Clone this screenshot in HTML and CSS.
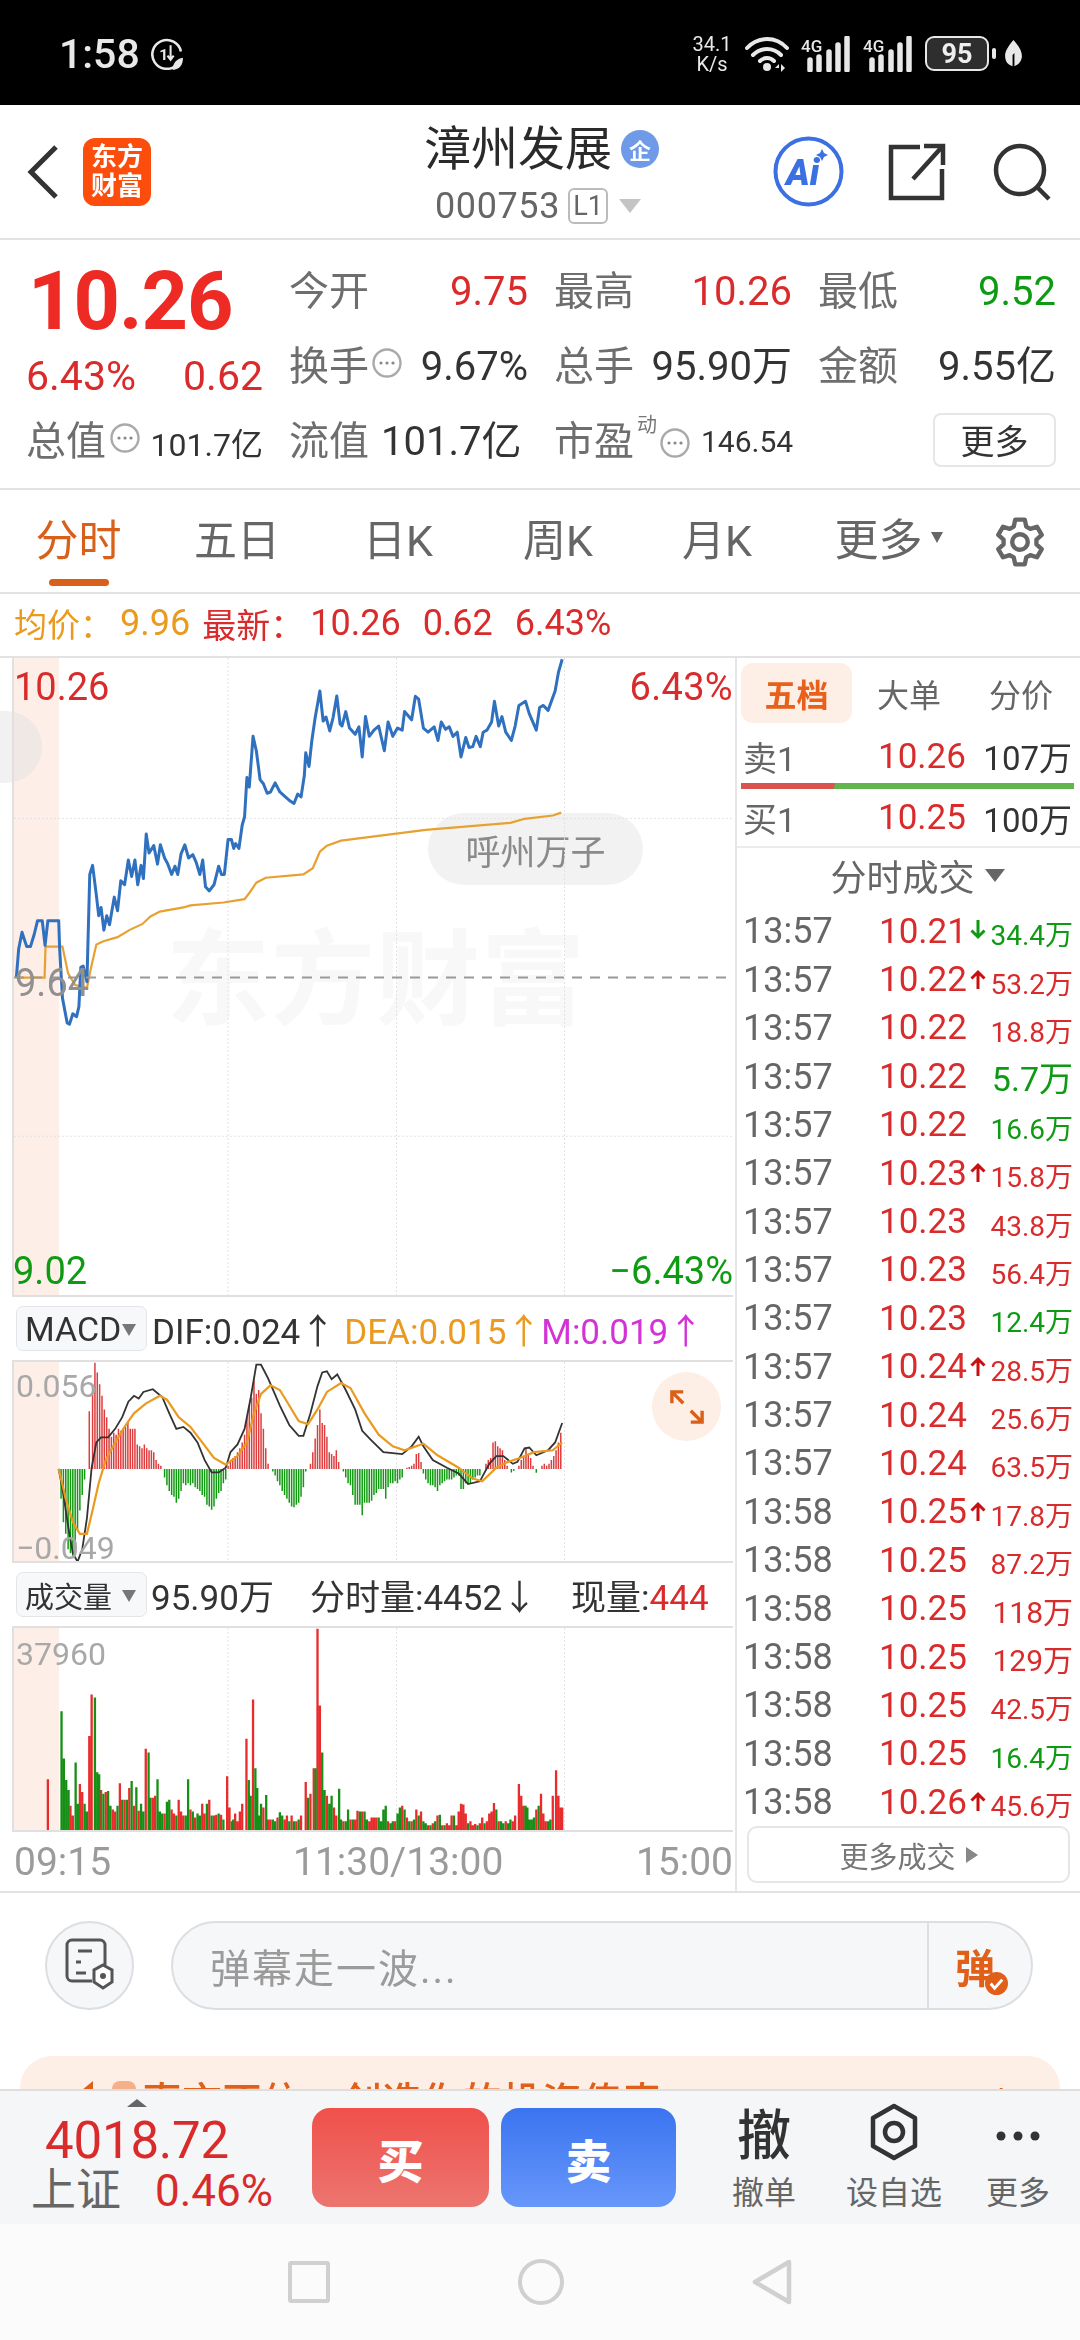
FILE: index.html
```html
<!DOCTYPE html>
<html lang="zh-CN">
<head>
<meta charset="utf-8">
<title>漳州发展</title>
<link rel="stylesheet" href="styles.css">
</head>
<body>
<div class="status">
  <div class="status-left">
    <span class="clock">1:58</span>
    <svg class="st-data" viewBox="0 0 32 32"><path d="M25 27A14 14 0 1 1 29 14" fill="none" stroke="#e8e8e8" stroke-width="2.5"/><text x="8" y="22" class="st-one">1</text><path d="M19 8v14M16 18l3 4 3-4" fill="none" stroke="#e8e8e8" stroke-width="2"/><path d="M21 32c0-7 4-11 10-12 0 7-3 11-10 12z" fill="#e8e8e8"/></svg>
  </div>
  <div class="status-right">
    <div class="speed"><span>34.1</span><span>K/s</span></div>
    <svg class="st-wifi" viewBox="0 0 46 36"><path d="M2 12C13 0 31 0 42 12M8 19c8-8 20-8 28 0M15 25c4-4 10-4 14 0" fill="none" stroke="#e8e8e8" stroke-width="4" stroke-linecap="round"/><circle cx="22" cy="31" r="4" fill="#e8e8e8"/><path d="M34 28l-4 4h4zM36 28v8l4-4z" fill="#e8e8e8"/></svg>
    <svg class="st-sig" viewBox="0 0 52 36"><text x="0" y="16" class="st-4g">4G</text><path d="M9 24v10M18 21v13M28 16v18M37 9v25M46 2v32" stroke="#e8e8e8" stroke-width="5.5" stroke-linecap="round"/></svg>
    <svg class="st-sig" viewBox="0 0 52 36"><text x="0" y="16" class="st-4g">4G</text><path d="M9 24v10M18 21v13M28 16v18M37 9v25M46 2v32" stroke="#e8e8e8" stroke-width="5.5" stroke-linecap="round"/></svg>
    <div class="battery">95</div>
    <span class="bat-tip"></span>
    <svg class="st-leaf" viewBox="0 0 20 30"><path d="M10 0c6 7 9 12 9 17 0 6-4 10-8 11V14l-2 2v12C4 27 1 23 1 17 1 12 4 7 10 0z" fill="#e8e8e8"/></svg>
  </div>
</div>

<header class="header">
  <div class="head-left">
    <svg class="back" viewBox="0 0 32 56"><path d="M29 3L4 28l25 25" fill="none" stroke="#333" stroke-width="5"/></svg>
    <div class="logo"><span>东方</span><span>财富</span></div>
  </div>
  <div class="head-center">
    <div class="name-row"><span class="name">漳州发展</span><span class="badge">企</span></div>
    <div class="code-row"><span class="code">000753</span><span class="l1">L1</span><span class="code-tri"></span></div>
  </div>
  <div class="head-right">
    <svg class="ai" viewBox="0 0 71 71"><circle cx="35.5" cy="35.5" r="33" fill="#fff" stroke="#3b70e2" stroke-width="4"/><text x="13" y="49" class="ai-text">Ai</text><path d="M49 13l2 4 4 2-4 2-2 4-2-4-4-2 4-2z" fill="#3b70e2"/></svg>
    <svg class="share" viewBox="0 0 58 58"><path d="M32 4H3v51h51V26" fill="none" stroke="#333" stroke-width="4.5"/><path d="M25 36L53 5M36 3h19v19" fill="none" stroke="#333" stroke-width="4.5"/></svg>
    <svg class="search" viewBox="0 0 58 58"><circle cx="27" cy="27" r="24" fill="none" stroke="#333" stroke-width="4.5"/><path d="M44 44l12 12" stroke="#333" stroke-width="4.5"/></svg>
  </div>
</header>

<svg class="defs"><defs>
  <symbol id="dots" viewBox="0 0 30 30"><circle cx="15" cy="15" r="13.5" fill="#fff" stroke="#aaa" stroke-width="2.4"/><circle cx="9" cy="15" r="1.6" fill="#888"/><circle cx="15" cy="15" r="1.6" fill="#888"/><circle cx="21" cy="15" r="1.6" fill="#888"/></symbol>
  <symbol id="up" viewBox="0 0 16 20"><path d="M8 20V3M1.500 9.500L8 3l6.500 6.500" fill="none" stroke="currentColor" stroke-width="3"/></symbol>
  <symbol id="down" viewBox="0 0 16 20"><path d="M8 0v17M1.500 10.500L8 17l6.500-6.500" fill="none" stroke="currentColor" stroke-width="3"/></symbol>
</defs></svg>

<section class="quote">
  <div class="cell price-cell">
    <div class="big">10.26</div>
    <div class="sub"><span>6.43%</span><span>0.62</span></div>
  </div>
  <div class="cell"><span class="lb">今开</span><span class="val red">9.75</span></div>
  <div class="cell"><span class="lb">最高</span><span class="val red">10.26</span></div>
  <div class="cell"><span class="lb">最低</span><span class="val green">9.52</span></div>
  <div class="cell"><span class="lb">换手</span><svg class="dot"><use href="#dots"/></svg><span class="val dark push">9.67%</span></div>
  <div class="cell"><span class="lb">总手</span><span class="val dark">95.90万</span></div>
  <div class="cell"><span class="lb">金额</span><span class="val dark">9.55亿</span></div>
  <div class="cell"><span class="lb">总值</span><svg class="dot"><use href="#dots"/></svg><span class="val-s dark">101.7亿</span></div>
  <div class="cell start"><span class="lb">流值</span><span class="val dark gap12">101.7亿</span></div>
  <div class="cell start"><span class="lb">市盈</span><sup class="sup">动</sup><svg class="dot dot-pe"><use href="#dots"/></svg><span class="val-xs dark">146.54</span></div>
  <div class="cell end"><span class="more-btn">更多</span></div>
</section>

<nav class="tabs">
  <div class="tab active">分时</div>
  <div class="tab">五日</div>
  <div class="tab">日K</div>
  <div class="tab">周K</div>
  <div class="tab">月K</div>
  <div class="tab tab-more">更多<i class="tab-tri"></i></div>
  <div class="tab-gear"><svg viewBox="0 0 50 50"><path d="M19 10.200L20.400 3.500 29.600 3.500 31 10.200 34.900 12.400 41.300 10.300 45.900 18.200 40.800 22.800 40.800 27.200 45.900 31.800 41.300 39.700 34.900 37.600 31 39.800 29.600 46.500 20.400 46.500 19 39.800 15.100 37.600 8.700 39.700 4.100 31.800 9.200 27.200 9.200 22.800 4.100 18.200 8.700 10.300 15.100 12.400z" fill="none" stroke="#666" stroke-width="4.200" stroke-linejoin="round"/><circle cx="25" cy="25" r="7.500" fill="none" stroke="#666" stroke-width="4.200"/></svg></div>
</nav>

<div class="info">
  <span class="amber i1">均价：</span><span class="amber v1">9.96</span>
  <span class="red v2">最新：</span><span class="red v3">10.26</span><span class="red v4">0.62</span><span class="red v5">6.43%</span>
</div>

<main class="main">
  <div class="charts">
    <div class="chart chart-main">
      <span class="wm">东方财富</span>
      <span class="pill">呼州万子</span>
      <svg class="plot" viewBox="25 15 1528 1545" preserveAspectRatio="none">
        <rect class="band" x="25" y="15" width="96" height="1545"/>
        <path class="grid" d="M480 15V1560M838 15V1560M1195 15V1560M25 404H1553M25 1175H1553"/>
        <polyline class="line-avg" points="30,790 90,790 92,715 128,715 140,780 155,808 180,815 188,770 200,710 215,702 245,692 270,675 298,660 315,642 335,630 385,620 400,615 470,608 515,600 525,585 540,560 560,548 640,540 660,525 675,485 690,470 720,458 900,432 1080,415 1110,405 1170,397 1188,390"/>
        <polyline class="line-price" points="30,790 35,720 42,680 52,715 60,715 68,685 75,652 85,652 91,712 97,652 120,652 122,720 128,840 138,900 143,903 150,878 158,885 163,860 167,765 172,762 180,800 186,540 192,518 200,590 205,640 210,620 216,675 222,640 228,662 238,595 245,628 252,555 260,565 268,505 275,545 282,505 288,565 295,518 300,550 306,442 312,488 322,470 330,515 336,468 345,500 352,515 360,540 367,520 373,540 380,490 388,468 396,500 405,492 412,510 420,540 426,505 432,570 440,580 450,565 460,520 466,540 472,540 480,455 487,455 492,477 496,465 503,477 510,420 515,400 520,305 525,328 533,205 540,240 548,310 555,320 563,343 570,340 580,318 590,340 600,350 612,362 620,368 628,345 635,352 642,300 645,245 652,278 658,215 665,160 675,95 682,168 688,158 696,192 703,160 711,107 718,175 722,180 730,145 738,185 750,200 758,182 765,255 772,157 780,205 790,190 800,180 812,240 820,170 830,205 840,185 850,190 855,145 870,165 878,108 885,115 895,185 905,195 918,182 926,215 933,170 942,188 950,182 958,205 967,195 975,255 985,208 992,232 1000,230 1007,205 1016,230 1022,195 1030,190 1040,170 1046,120 1055,180 1062,157 1070,195 1082,215 1090,180 1098,130 1112,120 1120,150 1135,190 1142,135 1150,130 1160,142 1175,95 1182,50 1190,18"/>
        <path class="dash" d="M25 790H1553"/>
      </svg>
      <span class="tag tl red">10.26</span>
      <span class="tag tr red">6.43%</span>
      <span class="tag ml">9.64</span>
      <span class="tag bl green">9.02</span>
      <span class="tag br green">−6.43%</span>
    </div>

    <div class="sub-head">
      <span class="sel">MACD<i class="sel-tri"></i></span>
      <span class="ind dark">DIF:0.024↑</span>
      <span class="ind orange">DEA:0.015↑</span>
      <span class="ind purple">M:0.019↑</span>
    </div>
    <div class="chart chart-sub">
      <svg class="plot" viewBox="25 178 1528 512" preserveAspectRatio="none">
        <rect class="band" x="25" y="178" width="96" height="512"/>
        <path class="grid" d="M480 178V690M838 178V690M1195 178V690"/>
        <path class="hist-r" d="M185 453V305M192 453V240M197 453V180M202 453V205M207 453V235M212 453V265M217 453V300M222 453V320M227 453V350M232 453V370M237 453V360M242 453V365M247 453V350M252 453V355M257 453V350M262 453V345M267 453V330M272 453V350M277 453V350M282 453V350M287 453V390M292 453V395M297 453V400M302 453V390M307 453V400M312 453V405M317 453V405M322 453V410M327 453V430M332 453V440M337 453V445M480 453V445M485 453V435M490 453V425M495 453V420M500 453V410M505 453V400M510 453V385M515 453V365M520 453V320M525 453V290M530 453V270M535 453V225M540 453V260M545 453V250M550 453V310M555 453V350M560 453V400M565 453V440M655 453V440M660 453V410M665 453V375M670 453V340M675 453V300M680 453V335M685 453V340M690 453V370M695 453V410M700 453V415M705 453V420M710 453V405M715 453V435M860 453V450M865 453V448M870 453V445M875 453V440M880 453V415M885 453V412M890 453V435M1028 453V440M1033 453V430M1038 453V425M1043 453V385M1048 453V382M1053 453V395M1058 453V400M1063 453V405M1068 453V430M1073 453V445M1098 453V445M1103 453V430M1108 453V420M1113 453V400M1118 453V415M1123 453V425M1128 453V445M1147 453V445M1152 453V440M1157 453V445M1162 453V440M1167 453V430M1172 453V420M1177 453V405M1182 453V385M1187 453V360"/>
        <path class="hist-g" d="M120 453V460M125 453V530M130 453V590M135 453V620M140 453V660M145 453V670M150 453V680M155 453V640M160 453V610M165 453V560M170 453V520M175 453V480M345 453V475M350 453V495M355 453V510M360 453V520M365 453V525M370 453V540M375 453V530M380 453V510M385 453V490M390 453V495M395 453V490M400 453V495M405 453V490M410 453V500M415 453V505M420 453V510M425 453V520M430 453V525M435 453V545M440 453V550M445 453V558M450 453V550M455 453V530M460 453V515M465 453V510M470 453V490M475 453V480M575 453V460M580 453V470M585 453V485M590 453V495M595 453V510M600 453V520M605 453V530M610 453V540M615 453V550M620 453V552M625 453V545M630 453V540M635 453V525M640 453V500M645 453V460M725 453V460M730 453V475M735 453V490M740 453V495M745 453V520M750 453V545M755 453V545M760 453V545M765 453V572M770 453V540M775 453V540M780 453V540M785 453V535M790 453V520M795 453V515M800 453V505M805 453V505M810 453V505M815 453V530M820 453V500M825 453V490M830 453V490M835 453V485M840 453V490M845 453V480M850 453V475M895 453V465M900 453V480M905 453V490M910 453V495M915 453V495M920 453V500M925 453V510M930 453V495M935 453V490M940 453V485M945 453V480M950 453V480M955 453V480M960 453V475M965 453V470M970 453V470M975 453V505M980 453V505M985 453V490M990 453V490M995 453V490M1000 453V480M1005 453V475M1010 453V470M1015 453V470M1082 453V462M1087 453V458M1135 453V463"/>
        <polyline class="line-dif" points="120,453 130,520 140,600 150,670 160,692 170,660 180,580 190,450 200,385 210,372 225,372 240,350 255,320 268,280 280,265 290,272 300,255 320,248 340,268 355,310 370,350 385,345 400,360 415,385 430,430 445,462 460,462 475,450 485,410 500,390 515,350 528,270 540,185 550,185 565,220 590,290 610,340 630,368 640,368 655,310 670,240 680,205 690,202 700,222 712,210 730,250 750,300 765,355 785,380 810,410 850,415 870,395 885,370 895,395 915,430 945,450 970,465 990,492 1015,485 1035,440 1050,420 1065,420 1085,440 1095,435 1110,400 1120,398 1135,418 1160,405 1175,385 1190,335"/>
        <polyline class="line-dea" points="120,453 135,530 150,590 165,620 180,620 190,570 205,490 220,430 240,385 260,345 280,310 305,285 335,265 350,275 375,320 400,345 425,385 450,425 475,442 500,420 520,385 535,310 550,260 570,238 590,250 610,290 630,330 650,338 670,300 690,255 720,232 740,245 770,310 800,365 830,395 855,405 895,388 925,418 970,450 1000,478 1020,485 1050,450 1075,435 1100,425 1130,410 1170,405 1190,385"/>
      </svg>
      <span class="tick t-top">0.056</span>
      <span class="tick t-bot">−0.049</span>
      <span class="expand"><svg viewBox="0 0 36 36"><path d="M2 14V2h12M2 2l12 12M34 22v12H22M34 34L22 22" fill="none" stroke="#d9601a" stroke-width="3.600"/></svg></span>
    </div>

    <div class="sub-head">
      <span class="sel sel-cn">成交量<i class="sel-tri"></i></span>
      <span class="ind dark v-total">95.90万</span>
      <span class="ind dark v-time">分时量:4452↓</span>
      <span class="ind dark v-now">现量:<b class="red">444</b></span>
    </div>
    <div class="chart chart-sub chart-vol">
      <svg class="plot" viewBox="25 853 1528 514" preserveAspectRatio="none">
        <rect class="band" x="25" y="853" width="96" height="514"/>
        <path class="grid" d="M480 853V1367M838 853V1367M1195 853V1367"/>
        <path class="vol-r" d="M97 1367V1238M145 1367V1305M150 1367V1330M165 1367V1250M170 1367V1270M185 1367V1128M190 1367V1022M210 1367V1265M220 1367V1270M235 1367V1315M240 1367V1320M250 1367V1248M260 1367V1290M270 1367V1260M280 1367V1305M290 1367V1318M305 1367V1160M320 1367V1285M325 1367V1280M345 1367V1325M360 1367V1315M365 1367V1325M375 1367V1290M380 1367V1320M385 1367V1330M400 1367V1315M410 1367V1335M425 1367V1300M430 1367V1325M440 1367V1290M450 1367V1330M455 1367V1328M465 1367V1328M478 1367V1230M483 1367V1310M495 1367V1325M500 1367V1345M505 1367V1320M510 1367V1300M519 1367V1135M533 1367V1035M555 1367V1310M565 1367V1340M570 1367V1340M585 1367V1335M600 1367V1340M605 1367V1330M615 1367V1330M625 1367V1345M635 1367V1330M645 1367V1245M655 1367V1275M662 1367V1210M670 1367V855M675 1367V1050M690 1367V1280M705 1367V1310M710 1367V1330M725 1367V1345M740 1367V1340M750 1367V1340M755 1367V1318M765 1367V1320M780 1367V1345M785 1367V1335M790 1367V1335M795 1367V1335M820 1367V1345M835 1367V1345M850 1367V1305M860 1367V1335M870 1367V1345M880 1367V1315M890 1367V1320M905 1367V1355M915 1367V1350M925 1367V1330M935 1367V1355M945 1367V1350M950 1367V1355M955 1367V1330M965 1367V1355M970 1367V1320M975 1367V1300M980 1367V1302M985 1367V1325M995 1367V1345M1000 1367V1355M1005 1367V1352M1015 1367V1350M1020 1367V1335M1030 1367V1345M1035 1367V1325M1040 1367V1320M1045 1367V1298M1055 1367V1345M1070 1367V1345M1085 1367V1345M1090 1367V1330M1098 1367V1250M1103 1367V1280M1108 1367V1305M1135 1367V1315M1145 1367V1275M1150 1367V1325M1155 1367V1345M1170 1367V1280M1177 1367V1215M1182 1367V1280M1187 1367V1310M1190 1367V1310"/>
        <path class="vol-g" d="M126 1367V1065M131 1367V1185M136 1367V1240M141 1367V1265M156 1367V1195M161 1367V1300M175 1367V1300M180 1367V1320M197 1367V1030M202 1367V1220M206 1367V1225M215 1367V1275M225 1367V1268M230 1367V1305M245 1367V1305M255 1367V1290M265 1367V1290M275 1367V1242M285 1367V1258M295 1367V1300M300 1367V1320M311 1367V1170M315 1367V1285M330 1367V1238M335 1367V1320M340 1367V1325M350 1367V1295M355 1367V1290M370 1367V1330M390 1367V1330M395 1367V1238M405 1367V1320M415 1367V1325M420 1367V1330M435 1367V1300M445 1367V1330M460 1367V1325M470 1367V1340M488 1367V1345M491 1367V1340M524 1367V1240M528 1367V1280M538 1367V1210M542 1367V1260M546 1367V1330M550 1367V1300M561 1367V1278M575 1367V1340M580 1367V1345M590 1367V1322M595 1367V1330M610 1367V1345M620 1367V1345M630 1367V1340M650 1367V1285M666 1367V1210M680 1367V1170M685 1367V1265M695 1367V1300M700 1367V1280M716 1367V1262M720 1367V1340M730 1367V1345M735 1367V1315M745 1367V1340M760 1367V1320M770 1367V1320M775 1367V1340M800 1367V1335M805 1367V1345M810 1367V1315M815 1367V1305M825 1367V1350M830 1367V1345M840 1367V1325M845 1367V1310M855 1367V1315M865 1367V1345M875 1367V1340M885 1367V1330M895 1367V1345M900 1367V1350M910 1367V1355M920 1367V1345M930 1367V1328M940 1367V1355M960 1367V1330M990 1367V1350M1010 1367V1355M1025 1367V1350M1050 1367V1315M1060 1367V1345M1065 1367V1350M1075 1367V1350M1080 1367V1340M1112 1367V1305M1116 1367V1310M1120 1367V1340M1125 1367V1340M1130 1367V1335M1140 1367V1305M1160 1367V1345M1165 1367V1340"/>
      </svg>
      <span class="tick t-vol">37960</span>
    </div>

    <div class="axis"><span>09:15</span><span>11:30/13:00</span><span class="ax-r">15:00</span></div>
  </div>

  <aside class="side">
    <div class="side-tabs">
      <span class="s-tab on">五档</span><span class="s-tab">大单</span><span class="s-tab">分价</span>
    </div>
    <div class="book"><span class="b-lb">卖1</span><span class="b-p red">10.26</span><span class="b-v">107万</span></div>
    <div class="book-bar"></div>
    <div class="book book-2"><span class="b-lb">买1</span><span class="b-p red">10.25</span><span class="b-v">100万</span></div>
    <div class="ticks-head">分时成交<i class="th-tri"></i></div>
    <div class="row"><span class="t">13:57</span><span class="p">10.21</span><svg class="ar green"><use href="#down"/></svg><span class="q green">34.4万</span></div>
    <div class="row"><span class="t">13:57</span><span class="p">10.22</span><svg class="ar red-d"><use href="#up"/></svg><span class="q red">53.2万</span></div>
    <div class="row"><span class="t">13:57</span><span class="p">10.22</span><span></span><span class="q red">18.8万</span></div>
    <div class="row"><span class="t">13:57</span><span class="p">10.22</span><span></span><span class="q q-l green">5.7万</span></div>
    <div class="row"><span class="t">13:57</span><span class="p">10.22</span><span></span><span class="q green">16.6万</span></div>
    <div class="row"><span class="t">13:57</span><span class="p">10.23</span><svg class="ar red-d"><use href="#up"/></svg><span class="q red">15.8万</span></div>
    <div class="row"><span class="t">13:57</span><span class="p">10.23</span><span></span><span class="q red">43.8万</span></div>
    <div class="row"><span class="t">13:57</span><span class="p">10.23</span><span></span><span class="q red">56.4万</span></div>
    <div class="row"><span class="t">13:57</span><span class="p">10.23</span><span></span><span class="q green">12.4万</span></div>
    <div class="row"><span class="t">13:57</span><span class="p">10.24</span><svg class="ar red-d"><use href="#up"/></svg><span class="q red">28.5万</span></div>
    <div class="row"><span class="t">13:57</span><span class="p">10.24</span><span></span><span class="q red">25.6万</span></div>
    <div class="row"><span class="t">13:57</span><span class="p">10.24</span><span></span><span class="q red">63.5万</span></div>
    <div class="row"><span class="t">13:58</span><span class="p">10.25</span><svg class="ar red-d"><use href="#up"/></svg><span class="q red">17.8万</span></div>
    <div class="row"><span class="t">13:58</span><span class="p">10.25</span><span></span><span class="q red">87.2万</span></div>
    <div class="row"><span class="t">13:58</span><span class="p">10.25</span><span></span><span class="q q-m red">118万</span></div>
    <div class="row"><span class="t">13:58</span><span class="p">10.25</span><span></span><span class="q q-m red">129万</span></div>
    <div class="row"><span class="t">13:58</span><span class="p">10.25</span><span></span><span class="q red">42.5万</span></div>
    <div class="row"><span class="t">13:58</span><span class="p">10.25</span><span></span><span class="q green">16.4万</span></div>
    <div class="row"><span class="t">13:58</span><span class="p">10.26</span><svg class="ar red-d"><use href="#up"/></svg><span class="q red">45.6万</span></div>
    <div class="more-ticks">更多成交<i class="mt-tri"></i></div>
  </aside>
</main>

<section class="comment">
  <div class="comment-row">
    <div class="round-btn"><svg viewBox="0 0 52 58"><path d="M28 44H8a5 5 0 0 1-5-5V8a5 5 0 0 1 5-5h28a5 5 0 0 1 5 5v20" fill="none" stroke="#555" stroke-width="3"/><path d="M14 14h14M12 25h5M12 36h10" stroke="#555" stroke-width="3"/><path d="M39 28l9 5v12l-9 6-9-6V33z" fill="#fff" stroke="#555" stroke-width="3"/><circle cx="39" cy="39" r="3" fill="#555"/></svg></div>
    <div class="input"><span class="ph">弹幕走一波...</span><span class="send">弹<i class="check"><svg viewBox="0 0 24 24"><path d="M6 12l4 5 8-9" fill="none" stroke="#fff" stroke-width="3"/></svg></i></span></div>
  </div>
  <div class="banner"><span class="b-arrow"></span><span class="b-star"></span><span class="b-text">直言不信，创造你的投资传奇</span><span class="b-close">|×</span></div>
</section>

<footer class="bottom">
  <div class="index">
    <i class="idx-tri"></i>
    <div class="idx-num">4018.72</div>
    <div class="idx-row"><span class="idx-name">上证</span><span class="idx-pct">0.46%</span></div>
  </div>
  <div class="btn buy">买</div>
  <div class="btn sell">卖</div>
  <div class="actions">
    <div class="act a1"><span class="act-big">撤</span><span class="act-lb">撤单</span></div>
    <div class="act a2"><svg class="act-ic" viewBox="0 0 50 58"><path d="M25 3l21 12v28L25 55 4 43V15z" fill="none" stroke="#333" stroke-width="4.500" stroke-linejoin="round"/><circle cx="25" cy="29" r="9" fill="none" stroke="#333" stroke-width="4.500"/></svg><span class="act-lb">设自选</span></div>
    <div class="act a3"><svg class="act-ic dots3" viewBox="0 0 46 12"><circle cx="6" cy="6" r="4.500" fill="#333"/><circle cx="23" cy="6" r="4.500" fill="#333"/><circle cx="40" cy="6" r="4.500" fill="#333"/></svg><span class="act-lb">更多</span></div>
  </div>
</footer>

<div class="sysnav">
  <span class="n-sq"></span>
  <span class="n-ci"></span>
  <svg class="n-tr" viewBox="0 0 40 46"><path d="M37 3L3 23l34 20z" fill="none" stroke="#d0d0d0" stroke-width="4.500" stroke-linejoin="round"/></svg>
</div>
<div class="edge-handle"></div>
</body>
</html>
```

FILE: styles.css
```css
* { box-sizing: border-box; }
html, body { margin: 0; padding: 0; }
body {
  width: 1080px; height: 2340px; overflow: hidden; position: relative; background: #fff;
  font-family: Roboto, "Noto Sans CJK SC", sans-serif; color: #333;
}
i { font-style: normal; }
.red { color: #d92b2b; }
.green { color: #0f9a14; }
.dark { color: #333; }
.amber { color: #ea9a1e; }
.orange { color: #ea9a1e; }
.purple { color: #d333d6; }
.red-d { color: #c81010; }
.defs { position: absolute; width: 0; height: 0; }

/* status bar */
.status { height: 105px; background: #000; display: flex; justify-content: space-between; align-items: center; padding: 2px 57px 0 59px; color: #e8e8e8; }
.status-left { display: flex; align-items: center; gap: 11px; }
.clock { font-size: 41px; font-weight: 500; }
.st-data { width: 33px; height: 33px; }
.st-one { font: 700 15px Roboto, sans-serif; fill: #e8e8e8; }
.status-right { display: flex; align-items: center; }
.speed { display: flex; flex-direction: column; align-items: center; font-size: 20px; line-height: 20px; width: 42px; }
.st-wifi { width: 46px; height: 36px; margin-left: 12px; }
.st-sig { width: 52px; height: 36px; margin-left: 10px; }
.st-4g { font: 500 17px Roboto, sans-serif; fill: #e8e8e8; }
.battery { width: 64px; height: 35px; margin-left: 10px; border: 2px solid #e8e8e8; border-radius: 9px; background: #2e2e2e; font-size: 27px; font-weight: 700; display: flex; align-items: center; justify-content: center; color: #eee; }
.bat-tip { width: 4px; height: 11px; background: #e8e8e8; border-radius: 2px; margin-left: 3px; }
.st-leaf { width: 19px; height: 28px; margin-left: 8px; }

/* header */
.header { height: 135px; border-bottom: 2px solid #e2e2e2; position: relative; display: flex; justify-content: space-between; align-items: center; }
.head-left { display: flex; align-items: center; padding-left: 27px; gap: 25px; }
.back { width: 32px; height: 56px; }
.logo { width: 68px; height: 68px; border-radius: 12px; background: #fc4d0c; color: #fff; font-size: 26px; font-weight: 700; line-height: 29px; display: flex; flex-direction: column; align-items: center; justify-content: center; margin-left: -1px; }
.head-center { position: absolute; left: 424px; top: 16px; }
.name-row { display: flex; align-items: center; height: 56px; }
.name { font-size: 47px; color: #2a2a2a; line-height: 56px; }
.badge { width: 38px; height: 38px; margin-left: 9px; border-radius: 50%; background: #6f9ae8; color: #fff; font-size: 22px; display: flex; align-items: center; justify-content: center; font-weight: 700; }
.code-row { display: flex; align-items: center; margin-top: 11px; margin-left: 11px; height: 36px; }
.code { font-size: 36px; color: #666; letter-spacing: .6px; }
.l1 { width: 40px; height: 36px; margin-left: 8px; border: 2px solid #bbb; border-radius: 6px; font-size: 27px; color: #666; display: flex; align-items: center; justify-content: center; }
.code-tri { margin-left: 11px; width: 0; height: 0; border-left: 11px solid transparent; border-right: 11px solid transparent; border-top: 14px solid #c4c4c4; }
.head-right { display: flex; align-items: center; padding-right: 29px; }
.ai { width: 71px; height: 71px; }
.ai-text { font: italic 900 36px Roboto, sans-serif; fill: #3b70e2; }
.share { width: 58px; height: 58px; margin-left: 44px; }
.search { width: 58px; height: 58px; margin-left: 47px; }

/* quote */
.quote { height: 250px; padding: 14px 24px 0 26px; border-bottom: 2px solid #e2e2e2; display: grid; grid-template-columns: 237px 239px 238px 238px; column-gap: 26px; grid-auto-rows: 75px; }
.cell { display: flex; align-items: center; justify-content: space-between; }
.cell.start { justify-content: flex-start; }
.cell.end { justify-content: flex-end; }
.price-cell { grid-row: span 2; flex-direction: column; align-items: stretch; justify-content: flex-start; }
.big { font-size: 81px; font-weight: 700; color: #ee2a24; line-height: 84px; margin-top: 6px; padding-left: 2px; letter-spacing: -1px; }
.sub { display: flex; justify-content: space-between; font-size: 41px; color: #d92b2b; line-height: 48px; margin-top: 8px; }
.lb { font-size: 40px; color: #6e6e6e; line-height: 48px; white-space: nowrap; flex: none; }
.val { font-size: 40px; line-height: 48px; white-space: nowrap; }
.val-s { font-size: 32px; margin-left: 9px; white-space: nowrap; }
.val-xs { font-size: 30px; margin-left: 11px; white-space: nowrap; }
.dot { width: 30px; height: 30px; margin: -8px 0 0 3px; flex: none; }
.push { margin-left: auto; }
.gap12 { margin-left: 12px; }
.sup { font-size: 20px; color: #777; margin: -34px 0 0 3px; line-height: 20px; flex: none; }
.dot-pe { margin: 2px 0 0 3px; }
.more-btn { width: 123px; height: 54px; margin-top: -4px; border: 2px solid #e6e6e6; border-radius: 8px; font-size: 34px; color: #333; display: flex; align-items: center; justify-content: center; }

/* tabs */
.tabs { height: 104px; display: grid; grid-template-columns: 157px 160px 162px 158px 160px 163px 120px; border-bottom: 2px solid #e2e2e2; }
.tab { display: flex; align-items: center; justify-content: center; font-size: 43px; color: #666; height: 94px; position: relative; }
.tab.active { color: #d9601a; }
.tab.active::after { content: ""; position: absolute; left: 49px; top: 89px; width: 60px; height: 7px; border-radius: 4px; background: #d9601a; }
.tab-more { padding-left: 20px; font-size: 44px; }
.tab-tri { margin-left: 8px; width: 0; height: 0; border-left: 6.500px solid transparent; border-right: 6.500px solid transparent; border-top: 11px solid #666; }
.tab-gear { display: flex; align-items: flex-start; justify-content: center; padding-top: 26px; }
.tab-gear svg { width: 52px; height: 52px; }

/* info line */
.info { height: 62px; padding: 0 0 4px 14px; display: flex; align-items: center; font-size: 36px; }
.i1 { font-size: 33px; }
.v1 { margin-left: 7px; }
.v2 { margin-left: 12px; font-size: 34px; }
.v3 { margin-left: 6px; }
.v4 { margin-left: 22px; }
.v5 { margin-left: 22px; }

/* main */
.main { height: 1237px; display: flex; border-bottom: 2px solid #e2e2e2; border-top: 2px solid #e2e2e2; }
.charts { width: 723px; margin-left: 12px; display: flex; flex-direction: column; }
.chart { position: relative; width: 721px; border-left: 2px solid #e0e0e0; border-bottom: 2px solid #e0e0e0; }
.chart-main { height: 639px; overflow: hidden; }
.chart-sub { height: 203px; border-top: 2px solid #e0e0e0; }
.chart-vol { height: 206px; }
.plot { position: absolute; left: 0; top: 0; width: 100%; height: 100%; overflow: hidden; }
.plot * { vector-effect: non-scaling-stroke; }
.band { fill: #fdeee8; mix-blend-mode: multiply; }
.grid { fill: none; stroke: #e2e2e2; stroke-width: 1; stroke-dasharray: 2 2; }
.dash { fill: none; stroke: #999; stroke-width: 2; stroke-dasharray: 10 8; }
.line-price { fill: none; stroke: #2f71bf; stroke-width: 3; stroke-linejoin: round; }
.line-avg { fill: none; stroke: #e8a030; stroke-width: 2.200; }
.line-dif { fill: none; stroke: #333; stroke-width: 1.800; }
.line-dea { fill: none; stroke: #ea9a1e; stroke-width: 2.200; }
.hist-r { fill: none; stroke: #dd3d3d; stroke-width: 1.500; }
.hist-g { fill: none; stroke: #109a10; stroke-width: 1.500; }
.vol-r { fill: none; stroke: #e82c2c; stroke-width: 2.300; }
.vol-g { fill: none; stroke: #168f16; stroke-width: 2.300; }

.wm { position: absolute; left: 152px; top: 269px; font-size: 104px; font-weight: 700; letter-spacing: 1px; color: #f8f8f8; line-height: 110px; white-space: nowrap; }
.tag { position: absolute; font-size: 38px; line-height: 42px; }
.tl { left: 0; top: 8px; }
.tr { right: 0; top: 8px; letter-spacing: .3px; }
.ml { left: 1px; top: 304px; color: #909090; }
.bl { left: -1px; bottom: 3px; }
.br { right: 0; bottom: 3px; }
.pill { position: absolute; left: 414px; top: 155px; width: 215px; height: 72px; border-radius: 36px; background: #f2f2f2; color: #8a8a8a; font-size: 35px; display: flex; align-items: center; justify-content: center; }

.sub-head { height: 63px; display: flex; align-items: center; padding-left: 4px; }
.sel { width: 131px; height: 45px; border: 1px solid #e3e5e8; border-radius: 7px; background: #f7f8fa; padding-left: 8px; font-size: 34px; color: #333; display: flex; align-items: center; flex: none; position: relative; }
.sel-cn { font-size: 29px; }
.sel-tri { position: absolute; right: 10px; top: 17px; width: 0; height: 0; border-left: 7px solid transparent; border-right: 7px solid transparent; border-top: 12px solid #777; }
.ind { font-size: 35px; white-space: nowrap; margin-left: 5px; }
.ind.orange { margin-left: 9px; }
.ind.purple { margin-left: 0; }
.ind.v-total { margin-left: 4px; }
.ind.v-time { margin-left: 36px; font-size: 35px; }
.ind.v-now { margin-left: 34px; font-size: 35px; }
.ind b { font-weight: 400; }
.tick { position: absolute; left: 2px; font-size: 32px; line-height: 34px; color: #a8a8a8; }
.t-top { top: 7px; }
.t-bot { top: 169px; }
.t-vol { top: 9px; }
.expand { position: absolute; left: 638px; top: 10px; width: 69px; height: 69px; border-radius: 50%; background: #fdeee6; display: flex; align-items: center; justify-content: center; }
.expand svg { width: 34px; height: 34px; }
.axis { display: grid; grid-template-columns: 279px auto 1fr; align-items: center; height: 59px; width: 721px; padding: 0 0 0 2px; font-size: 39px; color: #9b9b9b; flex: none; }
.ax-r { text-align: right; }

/* side */
.side { flex: 1; border-left: 2px solid #e6e6e6; display: flex; flex-direction: column; }
.side-tabs { height: 71px; padding: 5px 4px 0 4px; display: flex; align-items: flex-start; gap: 2px; }
.s-tab { flex: 1; height: 60px; display: flex; align-items: center; justify-content: center; font-size: 32px; color: #666; border-radius: 12px; }
.s-tab.on { flex: none; width: 111px; background: #fdeee6; color: #e8601a; font-weight: 700; }
.book { height: 54px; display: grid; grid-template-columns: 135px 1fr auto; align-items: center; padding: 0 8px 0 6px; }
.book-2 { height: 59px; border-bottom: 2px solid #ececec; }
.b-lb { font-size: 34px; color: #666; }
.b-p { font-size: 35px; }
.b-v { font-size: 33px; color: #333; }
.book-bar { height: 6px; margin: 0 6px 0 4px; background: linear-gradient(100deg, #d9534f 0 28%, #62b44f 28.300%); flex: none; }
.ticks-head { height: 59px; padding: 0 0 5px 18px; display: flex; align-items: center; justify-content: center; font-size: 36px; color: #666; flex: none; }
.th-tri { margin-left: 10px; width: 0; height: 0; border-left: 10px solid transparent; border-right: 10px solid transparent; border-top: 13px solid #666; }
.row { height: 48.400px; flex: none; display: grid; grid-template-columns: 136px 91px 18px 1fr; align-items: center; padding: 0 7px 0 6px; }
.t { font-size: 36px; color: #666; }
.p { font-size: 35px; color: #d92b2b; }
.ar { width: 16px; height: 20px; margin-top: -2px; }
.q { font-size: 28px; text-align: right; padding-top: 4px; white-space: nowrap; }
.q-m { font-size: 30px; padding-top: 2px; }
.q-l { font-size: 34px; padding-top: 0; }
.more-ticks { margin: 0 10px; height: 57px; border: 2px solid #e6e6e6; border-radius: 10px; display: flex; align-items: center; justify-content: center; font-size: 29px; color: #777; flex: none; }
.mt-tri { margin-left: 10px; width: 0; height: 0; border-top: 8px solid transparent; border-bottom: 8px solid transparent; border-left: 12px solid #888; }

/* comment */
.comment { height: 196px; overflow: hidden; padding: 28px 20px 0 20px; }
.comment-row { display: flex; padding: 0 27px 0 25px; gap: 37px; }
.round-btn { width: 89px; height: 89px; border-radius: 50%; border: 2px solid #dcdee2; background: #f6f7f9; display: flex; align-items: center; justify-content: center; flex: none; }
.round-btn svg { width: 52px; height: 58px; }
.input { flex: 1; height: 89px; border: 2px solid #dcdee2; border-radius: 45px; background: #f6f7f9; display: flex; justify-content: space-between; align-items: center; padding-left: 37px; }
.ph { font-size: 40px; color: #9b9b9b; letter-spacing: 2px; }
.send { position: relative; width: 104px; height: 85px; border-left: 2px solid #dcdee2; display: flex; align-items: center; padding-left: 26px; font-size: 40px; font-weight: 700; color: #e0601a; }
.check { position: absolute; left: 56px; top: 49px; width: 23px; height: 23px; border-radius: 50%; background: #e0601a; display: flex; }
.banner { margin-top: 46px; height: 33px; overflow: hidden; border-radius: 32px 32px 0 0; background: #fdeee6; position: relative; color: #e0601a; }
.b-arrow { position: absolute; left: 51px; top: 25px; width: 0; height: 0; border-right: 22px solid #e0601a; border-top: 18px solid transparent; }
.b-star { position: absolute; left: 92px; top: 25px; width: 24px; height: 8px; background: #f5b08a; border-radius: 8px 8px 0 0; }
.b-text { position: absolute; left: 122px; top: 19px; white-space: nowrap; font-size: 40px; line-height: 56px; font-weight: 500; }
.b-close { position: absolute; right: 34px; top: 19px; font-size: 38px; line-height: 56px; }

/* bottom bar */
.bottom { height: 135px; background: #f5f6f8; border-top: 2px solid #dedede; display: flex; align-items: flex-start; position: relative; }
.index { width: 312px; padding: 25px 0 0 31px; position: relative; flex: none; }
.idx-tri { position: absolute; left: 127px; top: 8px; width: 0; height: 0; border-left: 10px solid transparent; border-right: 10px solid transparent; border-bottom: 8px solid #666; }
.idx-num { font-size: 51px; line-height: 50px; color: #d92b2b; padding-left: 14px; letter-spacing: -.2px; }
.idx-row { display: flex; align-items: center; line-height: 50px; }
.idx-name { font-size: 45px; color: #666; }
.idx-pct { font-size: 44px; color: #d92b2b; margin-left: 34px; }
.btn { width: 177px; height: 99px; margin-top: 17px; border-radius: 18px; color: #fff; font-size: 46px; font-weight: 900; display: flex; align-items: center; justify-content: center; flex: none; }
.buy { background: linear-gradient(#f0504a, #ec7570); }
.sell { width: 175px; margin-left: 12px; background: linear-gradient(#3b74f0, #6797fa); }
.actions { margin-left: 24px; display: grid; grid-template-columns: 128px 132px 116px; }
.act { display: flex; flex-direction: column; align-items: center; height: 133px; position: relative; }
.act-big { font-size: 54px; line-height: 60px; color: #333; margin-top: 16px; font-weight: 500; }
.act-ic { width: 50px; height: 58px; margin-top: 12px; margin-bottom: 6px; }
.dots3 { width: 46px; height: 12px; margin-top: 39px; margin-bottom: 25px; }
.act-lb { font-size: 32px; line-height: 36px; color: #666; margin-top: 8px; }

/* system nav */
.sysnav { height: 117px; background: #fbfbfb; display: flex; align-items: center; justify-content: center; padding: 0 0 2px 0; gap: 188px; }
.n-sq { width: 42px; height: 42px; border: 4.500px solid #d0d0d0; border-radius: 3px; }
.n-ci { width: 46px; height: 46px; border: 4.500px solid #d0d0d0; border-radius: 50%; }
.n-tr { width: 40px; height: 46px; }

.edge-handle { position: absolute; left: -44px; top: 711px; width: 86px; height: 72px; border-radius: 36px; background: rgba(225, 225, 225, .45); }
```
